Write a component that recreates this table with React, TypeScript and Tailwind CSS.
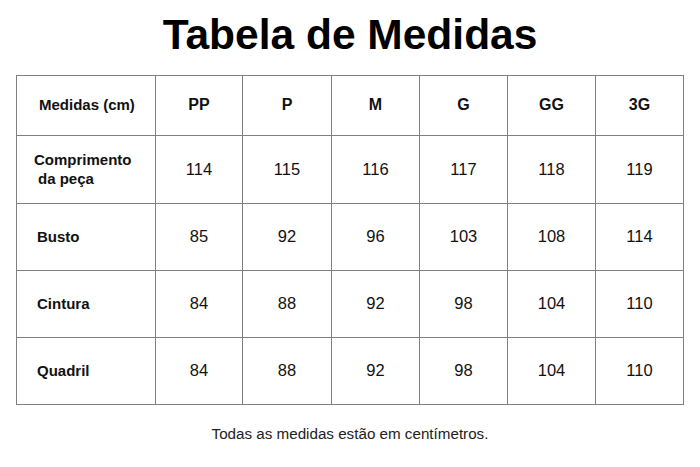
const sizes = ["PP", "P", "M", "G", "GG", "3G"];

const rows = [
  { label: ["Comprimento", "da peça"], values: [114, 115, 116, 117, 118, 119], h: "h-[68px]" },
  { label: ["Busto"], values: [85, 92, 96, 103, 108, 114], h: "h-[67px]" },
  { label: ["Cintura"], values: [84, 88, 92, 98, 104, 110], h: "h-[67px]" },
  { label: ["Quadril"], values: [84, 88, 92, 98, 104, 110], h: "h-[67px]" },
];

const colWidths = ["w-[139px]", "w-[87px]", "w-[89px]", "w-[88px]", "w-[88px]", "w-[88px]", "w-[88px]"];

export default function App() {
  return (
    <div
      className="w-[700px] h-[467px] bg-white text-[#111] flex flex-col items-center"
      style={{ fontFamily: '"Liberation Sans", Arial, sans-serif' }}
    >
      <h1 className="pt-[14px] text-[42.5px] leading-none font-bold text-black">
        Tabela de Medidas
      </h1>

      <table className="mt-[18px] w-[668px] border-collapse table-fixed">
        <colgroup>
          {colWidths.map((w, i) => (
            <col key={i} className={w} />
          ))}
        </colgroup>
        <thead>
          <tr className="h-[60px]">
            <th className="border border-[#808080] pl-[22px] text-left text-[15px] font-bold">
              Medidas (cm)
            </th>
            {sizes.map((s) => (
              <th key={s} className="border border-[#808080] text-center text-[16px] font-bold">
                {s}
              </th>
            ))}
          </tr>
        </thead>
        <tbody>
          {rows.map((r) => (
            <tr key={r.label[0]} className={r.h}>
              <td className="border border-[#808080] pl-[17px] text-left text-[15px] font-bold leading-[19px]">
                {r.label.length > 1 ? (
                  <>
                    <div>{r.label[0]}</div>
                    <div className="pl-[4px]">{r.label[1]}</div>
                  </>
                ) : (
                  <div className="pl-[3px]">{r.label[0]}</div>
                )}
              </td>
              {r.values.map((v, i) => (
                <td key={i} className="border border-[#808080] text-center text-[16.5px]">
                  {v}
                </td>
              ))}
            </tr>
          ))}
        </tbody>
      </table>

      <p className="mt-[19px] text-[15.2px] leading-[20px] text-[#222]">
        Todas as medidas estão em centímetros.
      </p>
    </div>
  );
}
